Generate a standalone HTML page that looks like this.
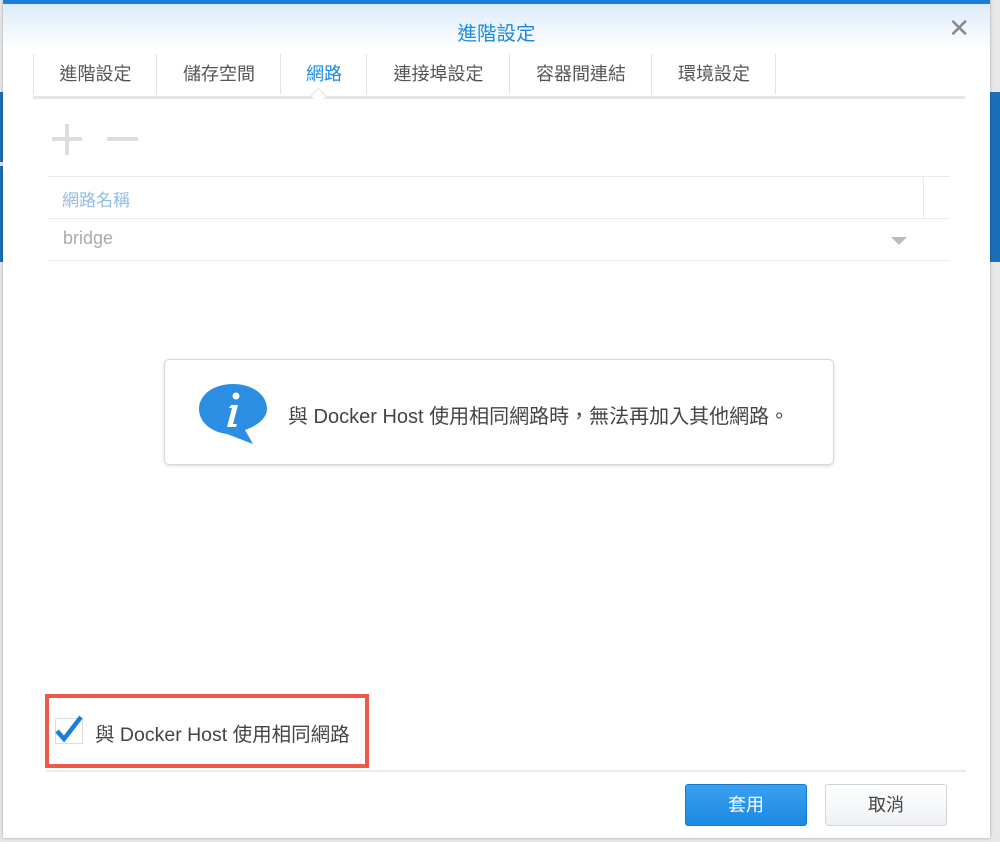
<!DOCTYPE html>
<html><head><meta charset="utf-8"><style>
body{margin:0;width:1000px;height:842px;background:#e8e8e8;position:relative;overflow:hidden;font-family:"Liberation Sans","Noto Sans CJK TC",sans-serif;}
.bgb{position:absolute;background:#1b6fb8}
#dlg{position:absolute;left:3px;top:0;width:987px;height:838px;background:#fff;box-sizing:border-box;box-shadow:0 0 3px rgba(0,0,0,.3)}
.topbar{position:absolute;left:0;top:0;right:0;height:4px;background:#1a7fd8}
.hdr{position:absolute;left:0;top:4px;right:0;height:46px;background:linear-gradient(#dcebf9,#fff)}
.title{position:absolute;left:0;right:0;top:17px;text-align:center;color:#1a8ae0;font-size:19.5px}
.x{position:absolute;right:20px;top:15px;color:#8a8a8a;font-size:26px;line-height:26px}
.tabs{position:absolute;left:30px;top:54px;width:932px;height:42px;border-bottom:3px solid #e6e6e6}
.tab{position:absolute;top:0;height:40px;line-height:40px;font-size:18px;color:#555;text-align:center;border-left:1px solid #e2e2e2}
.t{position:absolute;color:#aaa}
.line{position:absolute;height:1px;background:#eaeaea}
</style></head><body>
<div class="bgb" style="left:0;top:92px;width:3px;height:70px"></div>
<div class="bgb" style="left:0;top:166px;width:3px;height:96px"></div>
<div class="bgb" style="left:990px;top:92px;width:10px;height:170px"></div>
<div id="dlg">
<div class="topbar"></div>
<div class="hdr"></div>
<div class="title">進階設定</div>
<div class="x">✕</div>
<div class="tabs">
 <div class="tab" style="left:0;width:123px">進階設定</div>
 <div class="tab" style="left:123px;width:124px">儲存空間</div>
 <div class="tab" style="left:247px;width:86px;color:#1a8ae0">網路</div>
 <div class="tab" style="left:333px;width:143px">連接埠設定</div>
 <div class="tab" style="left:476px;width:142px">容器間連結</div>
 <div class="tab" style="left:618px;width:124px">環境設定</div>
 <div class="tab" style="left:742px;width:0"></div>
</div>
<div style="position:absolute;left:310px;top:90px;width:10px;height:10px;background:#fff;border-left:1px solid #e0e0e0;border-top:1px solid #e0e0e0;transform:rotate(45deg)"></div>
<div style="position:absolute;left:49px;top:137px;width:30px;height:4px;background:#ddd"></div>
<div style="position:absolute;left:62px;top:124px;width:4px;height:31px;background:#ddd"></div>
<div style="position:absolute;left:104px;top:137px;width:31px;height:4px;background:#ddd"></div>
<div class="line" style="left:45px;top:176px;width:902px"></div>
<div style="position:absolute;left:920px;top:176px;width:1px;height:42px;background:#eaeaea"></div>
<div class="t" style="left:59px;top:186px;font-size:17px;color:#8ebde6">網路名稱</div>
<div class="line" style="left:45px;top:218px;width:902px"></div>
<div class="t" style="left:60px;top:228px;font-size:18px;color:#aaa">bridge</div>
<div style="position:absolute;left:888px;top:237px;border-left:8px solid transparent;border-right:8px solid transparent;border-top:8px solid #bbb"></div>
<div class="line" style="left:45px;top:260px;width:902px"></div>
<div style="position:absolute;left:161px;top:359px;width:668px;height:104px;border:1px solid #d8d8d8;border-radius:5px;box-shadow:0 1px 3px rgba(0,0,0,.15)">
 <svg style="position:absolute;left:30px;top:20px" width="78" height="68" viewBox="0 0 78 68">
  <path d="M38 4C18 4 4 15 4 29c0 13 12 23 28 25l26 10-8-14c12-4 22-12 22-21C72 15 58 4 38 4z" fill="#2c8ee3"/>
  <circle cx="41" cy="16" r="3.5" fill="#fff"/>
  <path d="M36 25h7l-5 19h4l-1 3h-9l5-19h-3z" fill="#fff"/>
 </svg>
 <div style="position:absolute;left:123px;top:40px;font-size:20px;color:#444">與 Docker Host 使用相同網路時，無法再加入其他網路。</div>
</div>
<div style="position:absolute;left:42px;top:694px;width:324px;height:74px;border:4px solid #ee5a4a;box-sizing:border-box"></div>
<div style="position:absolute;left:52px;top:718px;width:26px;height:24px;border:1px solid #ddd;background:#fff"></div>
<svg style="position:absolute;left:51px;top:714px" width="30" height="30" viewBox="0 0 30 30"><path d="M3 17l7 8L27 3" stroke="#1a7fd8" stroke-width="4.5" fill="none"/></svg>
<div style="position:absolute;left:92px;top:718px;font-size:19.5px;color:#444">與 Docker Host 使用相同網路</div>
<div class="line" style="left:43px;top:770px;width:920px;height:2px"></div>
<div style="position:absolute;left:682px;top:784px;width:122px;height:42px;border-radius:3px;background:linear-gradient(#3aa1f0,#1b88e2);border:1px solid #1678cc;box-sizing:border-box;color:#fff;font-size:18px;text-align:center;line-height:40px">套用</div>
<div style="position:absolute;left:822px;top:784px;width:122px;height:42px;border-radius:3px;background:linear-gradient(#fff,#eef1f4);border:1px solid #cfd6dd;box-sizing:border-box;color:#444;font-size:18px;text-align:center;line-height:40px">取消</div>
</div>
</body></html>
